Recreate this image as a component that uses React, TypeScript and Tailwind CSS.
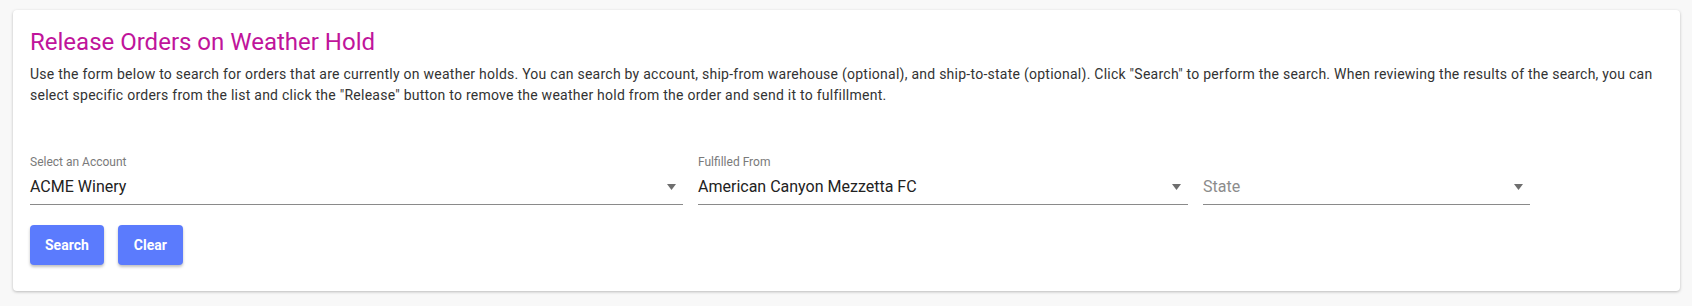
import React from "react";

// Weather hold release search panel
const fields = [
  { label: "Select an Account", value: "ACME Winery", width: "w-[653px]" },
  { label: "Fulfilled From", value: "American Canyon Mezzetta FC", width: "w-[490px]" },
  { label: "", value: "", placeholder: "State", width: "w-[327px]" },
];

const Caret = () => (
  <svg width="9" height="6" viewBox="0 0 9 6" className="shrink-0">
    <path d="M0 0h9L4.5 6z" fill="#6e6e6e" />
  </svg>
);

type FieldProps = {
  label: string;
  value: string;
  placeholder?: string;
  width: string;
};

const SelectField: React.FC<FieldProps> = ({ label, value, placeholder, width }) => (
  <div className={`${width} shrink-0`}>
    <div className="h-4 text-[12px] leading-4 text-[#7a7a7a]">{label}</div>
    <div className="mt-[5px] flex items-center justify-between border-b border-[#8a8a8a] pb-[5px] pr-[7px]">
      {value ? (
        <span className="text-[16px] leading-6 text-[#222]">{value}</span>
      ) : (
        <span className="text-[16px] leading-6 text-[#8c8c8c]">{placeholder}</span>
      )}
      <Caret />
    </div>
  </div>
);

export default function App() {
  return (
    <div
      className="min-h-[306px] bg-[#f8f8f8] pt-[10px] pl-[13px] pr-[12px]"
      style={{ fontFamily: "Roboto, 'Liberation Sans', sans-serif" }}
    >
      <div className="rounded-[4px] bg-white px-[17px] pt-4 pb-[26px] shadow-[0_1px_3px_rgba(0,0,0,0.25)]">
        <h1 className="text-[24px] leading-8 font-normal text-[#c0149b]">
          Release Orders on Weather Hold
        </h1>
        <p className="mt-[6px] text-[14px] leading-[21px] tracking-[0.25px] text-[#333]">
          Use the form below to search for orders that are currently on weather holds. You can search by account,
          ship-from warehouse (optional), and ship-to-state (optional). Click "Search" to perform the search. When
          reviewing the results of the search, you can select specific orders from the list and click the "Release"
          button to remove the weather hold from the order and send it to fulfillment.
        </p>

        <div className="mt-[48px] flex gap-[15px]">
          {fields.map((f, i) => (
            <SelectField key={i} {...f} />
          ))}
        </div>

        <div className="mt-5 flex gap-[14px]">
          <button className="h-10 rounded-[4px] bg-[#5b7bfd] px-[15px] text-[14px] font-bold text-white shadow-[0_2px_3px_rgba(0,0,0,0.25)]">
            Search
          </button>
          <button className="h-10 rounded-[4px] bg-[#5b7bfd] px-[16px] text-[14px] font-bold text-white shadow-[0_2px_3px_rgba(0,0,0,0.25)]">
            Clear
          </button>
        </div>
      </div>
    </div>
  );
}
